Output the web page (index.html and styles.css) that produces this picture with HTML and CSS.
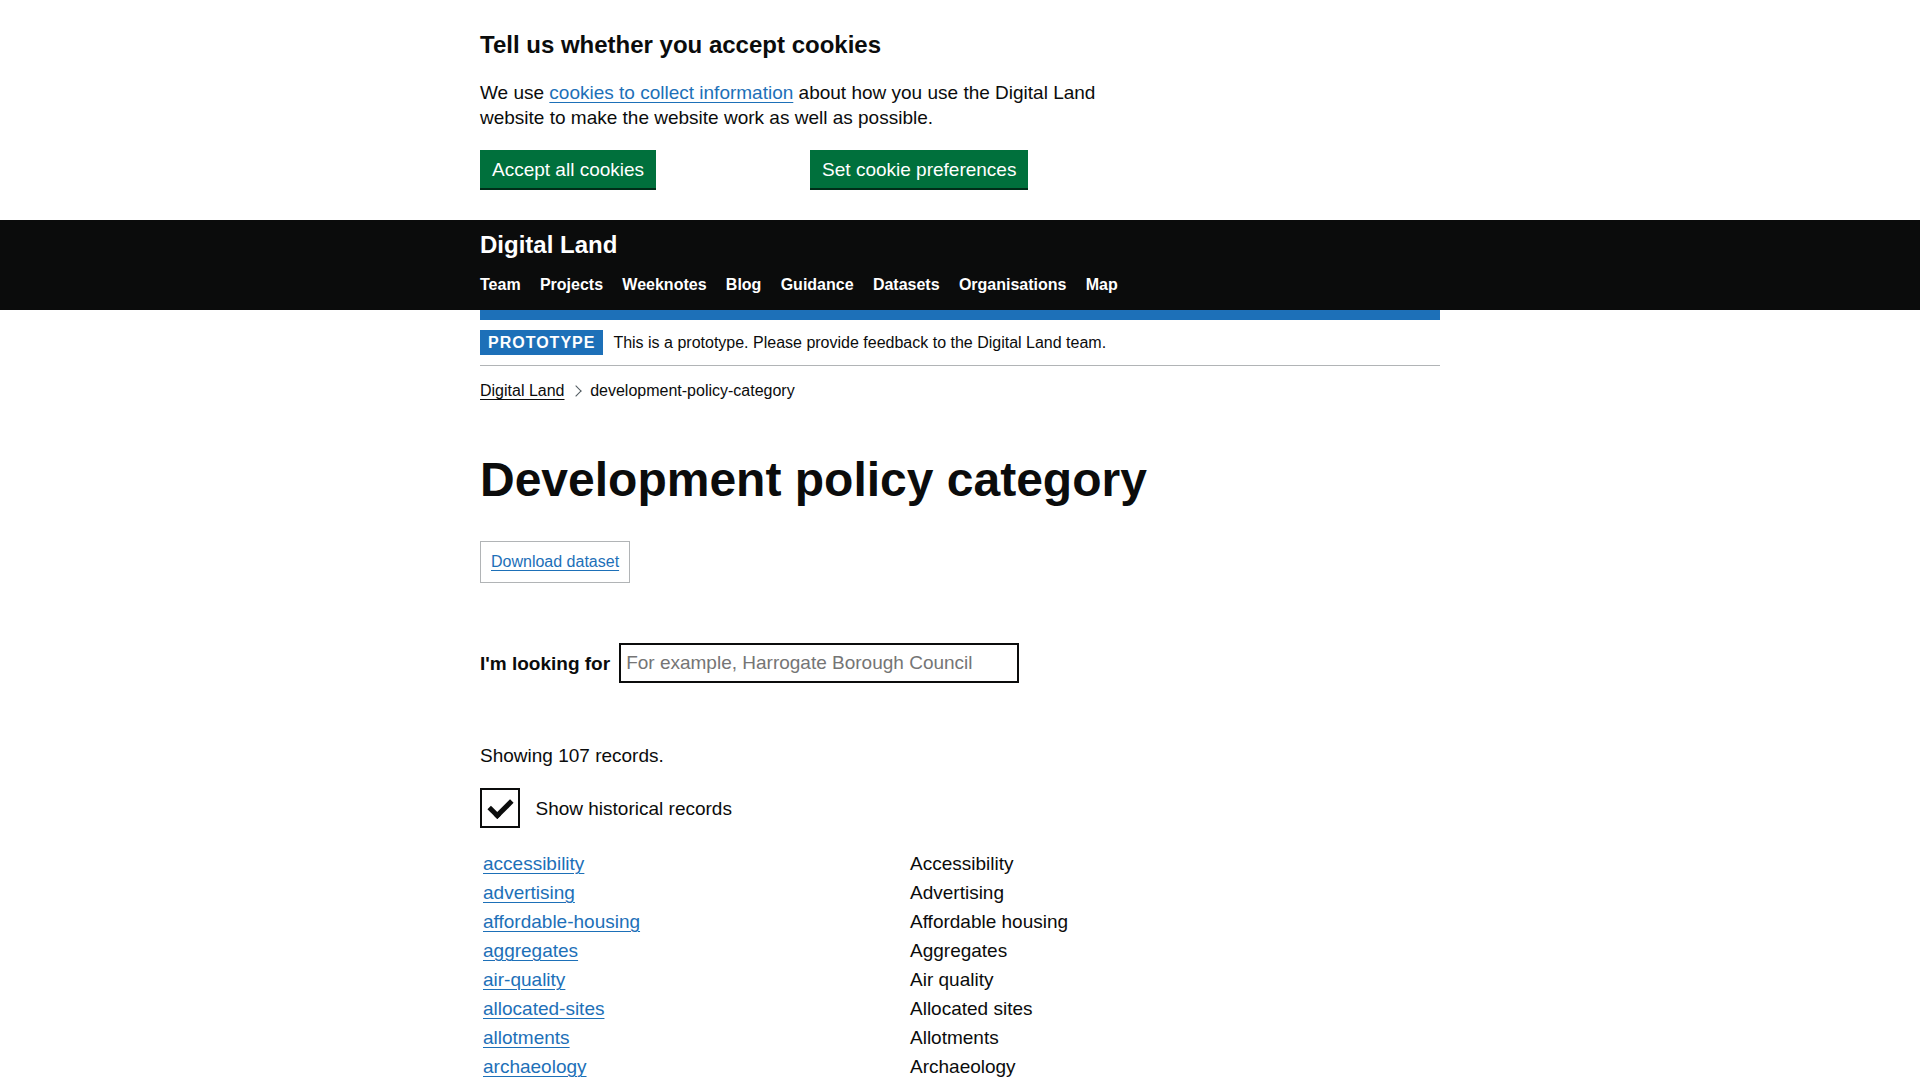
FILE: index.html
```html
<!DOCTYPE html>
<html lang="en">
<head>
<meta charset="utf-8">
<title>Development policy category - Digital Land</title>
<link rel="stylesheet" href="styles.css">
</head>
<body>
<div class="cookie-banner">
  <div class="container">
    <div class="cookie-inner">
      <h2 class="cookie-heading">Tell us whether you accept cookies</h2>
      <p class="cookie-text">We use <a class="link" href="#">cookies to collect information</a> about how you use the Digital Land website to make the website work as well as possible.</p>
      <div class="cookie-buttons">
        <button class="button" type="button">Accept all cookies</button>
        <button class="button" type="button">Set cookie preferences</button>
      </div>
    </div>
  </div>
</div>
<header class="header">
  <div class="container">
    <a class="header-logo" href="#">Digital Land</a>
    <ul class="header-nav">
      <li><a href="#">Team</a></li>
      <li><a href="#">Projects</a></li>
      <li><a href="#">Weeknotes</a></li>
      <li><a href="#">Blog</a></li>
      <li><a href="#">Guidance</a></li>
      <li><a href="#">Datasets</a></li>
      <li><a href="#">Organisations</a></li>
      <li><a href="#">Map</a></li>
    </ul>
  </div>
</header>
<div class="container">
  <div class="phase-banner">
    <strong class="tag">Prototype</strong>
    <span class="phase-text">This is a prototype. Please provide feedback to the Digital Land team.</span>
  </div>
  <ol class="breadcrumbs">
    <li class="crumb"><a class="crumb-link" href="#">Digital Land</a></li>
    <li class="crumb crumb-current">development-policy-category</li>
  </ol>
  <main class="main">
    <h1 class="heading-xl">Development policy category</h1>
    <div class="download-box"><a class="link" href="#">Download dataset</a></div>
    <div class="search-row">
      <label class="search-label" for="q">I'm looking for</label>
      <input class="search-input" id="q" type="text" placeholder="For example, Harrogate Borough Council">
    </div>
    <p class="body-text showing">Showing 107 records.</p>
    <div class="checkbox-row">
      <span class="checkbox-box"></span>
      <span class="checkbox-label">Show historical records</span>
    </div>
    <table class="records">
      <tbody>
        <tr><td class="col-key"><a class="link" href="#">accessibility</a></td><td>Accessibility</td></tr>
        <tr><td class="col-key"><a class="link" href="#">advertising</a></td><td>Advertising</td></tr>
        <tr><td class="col-key"><a class="link" href="#">affordable-housing</a></td><td>Affordable housing</td></tr>
        <tr><td class="col-key"><a class="link" href="#">aggregates</a></td><td>Aggregates</td></tr>
        <tr><td class="col-key"><a class="link" href="#">air-quality</a></td><td>Air quality</td></tr>
        <tr><td class="col-key"><a class="link" href="#">allocated-sites</a></td><td>Allocated sites</td></tr>
        <tr><td class="col-key"><a class="link" href="#">allotments</a></td><td>Allotments</td></tr>
        <tr><td class="col-key"><a class="link" href="#">archaeology</a></td><td>Archaeology</td></tr>
        <tr><td class="col-key"><a class="link" href="#">biodiversity</a></td><td>Biodiversity</td></tr>
        <tr><td class="col-key"><a class="link" href="#">brownfield-land</a></td><td>Brownfield land</td></tr>
        <tr><td class="col-key"><a class="link" href="#">car-parking</a></td><td>Car parking</td></tr>
        <tr><td class="col-key"><a class="link" href="#">climate-change</a></td><td>Climate change</td></tr>
      </tbody>
    </table>
  </main>
</div>
</body>
</html>
```
FILE: styles.css
```css
html, body {
  margin: 0;
  padding: 0;
  background: #ffffff;
  color: #0b0c0c;
  font-family: "Liberation Sans", Arial, sans-serif;
}

.container {
  width: 960px;
  margin: 0 auto;
}

.link {
  color: #1d70b8;
  text-decoration: underline;
  text-underline-offset: 0.1578em;
  text-decoration-thickness: 1px;
}

/* Cookie banner */
.cookie-banner {
  background: #ffffff;
  padding: 30px 0 32px;
}

.cookie-inner {
  max-width: 640px;
}

.cookie-heading {
  margin: 0 0 20px;
  font-size: 24px;
  line-height: 30px;
  font-weight: 700;
}

.cookie-text {
  margin: 0 0 20px;
  font-size: 19px;
  line-height: 25px;
}

.cookie-buttons {
  display: flex;
  gap: 154px;
  height: 38px;
}

.button {
  box-sizing: border-box;
  height: 38px;
  margin: 0;
  padding: 8px 10px 7px;
  border: 2px solid transparent;
  border-radius: 0;
  background: #00703c;
  box-shadow: 0 2px 0 #002d18;
  color: #ffffff;
  font-family: inherit;
  font-size: 19px;
  line-height: 19px;
  cursor: pointer;
}

/* Header */
.header {
  background: #0b0c0c;
  padding: 10px 0 15px;
}

.header-logo {
  display: block;
  color: #ffffff;
  text-decoration: none;
  font-size: 24px;
  line-height: 30px;
  font-weight: 700;
}

.header-nav {
  display: flex;
  gap: 19.3px;
  list-style: none;
  margin: 15px 0 0;
  padding: 0;
}

.header-nav a {
  display: block;
  color: #ffffff;
  text-decoration: none;
  font-size: 16px;
  line-height: 20px;
  font-weight: 700;
}

/* Phase banner */
.phase-banner {
  display: flex;
  align-items: baseline;
  border-top: 10px solid #1d70b8;
  border-bottom: 1px solid #b1b4b6;
  padding: 10px 0;
}

.tag {
  display: inline-block;
  margin-right: 10px;
  padding: 5px 8px 4px;
  background: #1d70b8;
  color: #ffffff;
  font-size: 16px;
  line-height: 16px;
  font-weight: 700;
  letter-spacing: 1px;
  text-transform: uppercase;
}

.phase-text {
  font-size: 16px;
  line-height: 20px;
}

/* Breadcrumbs */
.breadcrumbs {
  display: flex;
  list-style: none;
  margin: 15px 0 0;
  padding: 0;
  font-size: 16px;
  line-height: 20px;
}

.crumb {
  position: relative;
}

.crumb + .crumb {
  margin-left: 10px;
  padding-left: 15.655px;
}

.crumb + .crumb::before {
  content: "";
  position: absolute;
  top: 0;
  bottom: 0;
  left: -2.6px;
  width: 7px;
  height: 7px;
  margin: auto 0;
  transform: rotate(45deg);
  border-style: solid;
  border-width: 1px 1px 0 0;
  border-color: #505a5f;
}

.crumb-link {
  color: #0b0c0c;
  text-decoration: underline;
  text-underline-offset: 0.1578em;
  text-decoration-thickness: 1px;
}

/* Main */
.main {
  padding-bottom: 40px;
}

.heading-xl {
  margin: 54px 0 36px;
  font-size: 48px;
  line-height: 50px;
  font-weight: 700;
}

.download-box {
  width: fit-content;
  border: 1px solid #b1b4b6;
  padding: 10px;
  font-size: 16px;
  line-height: 20px;
}

.search-row {
  display: flex;
  align-items: center;
  margin-top: 60px;
}

.search-label {
  margin-right: 9px;
  font-size: 19px;
  line-height: 25px;
  font-weight: 700;
}

.search-input {
  box-sizing: border-box;
  width: 400px;
  height: 40px;
  margin: 0;
  padding: 5px;
  border: 2px solid #0b0c0c;
  border-radius: 0;
  font-family: inherit;
  font-size: 19px;
  line-height: 25px;
  color: #0b0c0c;
}

.search-input::placeholder {
  color: #757575;
  opacity: 1;
}

.body-text {
  font-size: 19px;
  line-height: 25px;
}

.showing {
  margin: 60px 0 0;
}

.checkbox-row {
  display: flex;
  align-items: center;
  margin-top: 20px;
  height: 40px;
}

.checkbox-box {
  position: relative;
  box-sizing: border-box;
  width: 40px;
  height: 40px;
  border: 2px solid #0b0c0c;
  flex: none;
}

.checkbox-box::after {
  content: "";
  position: absolute;
  top: 9px;
  left: 7px;
  width: 18px;
  height: 9px;
  transform: rotate(-45deg);
  border-style: solid;
  border-color: #0b0c0c;
  border-width: 0 0 5px 5px;
  border-top-color: transparent;
  box-sizing: content-box;
}

.checkbox-label {
  margin-left: 15.5px;
  font-size: 19px;
  line-height: 25px;
}

.records {
  width: 960px;
  margin-top: 20px;
  border-collapse: separate;
  border-spacing: 2px;
  font-size: 19px;
  line-height: 25px;
}

.records td {
  padding: 1px;
  vertical-align: top;
}

.records .col-key {
  width: 423px;
}
```
